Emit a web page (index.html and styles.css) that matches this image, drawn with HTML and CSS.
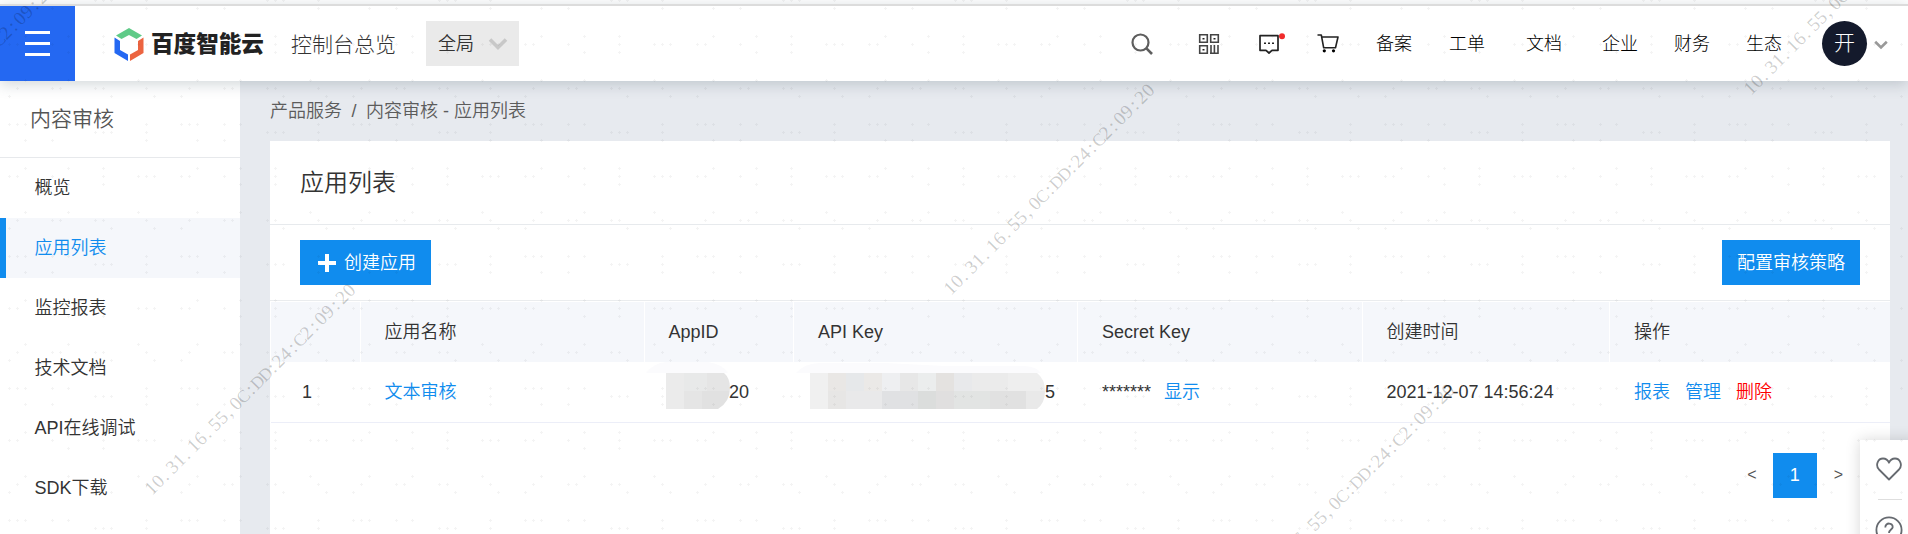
FILE: index.html
```html
<!DOCTYPE html>
<html lang="zh-CN">
<head>
<meta charset="utf-8">
<title>应用列表</title>
<link rel="stylesheet" href="styles.css">
</head>
<body>
<header class="topbar">
  <div class="menu-btn"><i></i><i></i><i></i></div>
  <div class="logo">
    <svg class="logo-mark" viewBox="0 0 30 34">
      <path d="M15 1 28 8.5 22.5 12 15 8 7.5 12 2 8.5Z" fill="#5fcb88"/>
      <path d="M0.5 10.5 6 14v9l8 4.500V34L0.5 26Z" fill="#2468f2"/>
      <path d="M29.5 10.5 24 14v9l-8 4.500V34L29.5 26Z" fill="#ec6440"/>
    </svg>
    <span class="logo-text">百度智能云</span>
  </div>
  <span class="overview">控制台总览</span>
  <div class="region"><span>全局</span>
    <svg width="20" height="14" viewBox="0 0 20 14"><path d="M2 2.500 10 10.500 18 2.500" fill="none" stroke="#c8c8c8" stroke-width="3.600"/></svg>
  </div>
  <nav class="tools">
    <svg class="icon" viewBox="0 0 22 22"><circle cx="9.500" cy="9.500" r="8" fill="none" stroke="#5e5e5e" stroke-width="2.200"/><path d="M15.200 15.200 21 21" stroke="#5e5e5e" stroke-width="2.600"/></svg>
    <svg class="icon qr" viewBox="0 0 22 22"><g fill="none" stroke="#444" stroke-width="1.600"><path d="M1.700 1.700h7.600v7.600H1.700zM12.700 1.700h7.600v7.600h-7.600zM1.700 12.700h7.600v7.600H1.700zM13 12v8M16.400 12v8M20 12v8.300h-8"/></g><path d="M4.500 5h2v1.400h-2zM15.500 5h2v1.400h-2zM4.500 16h2v1.400h-2z" fill="#222"/></svg>
    <svg class="icon msg" viewBox="0 0 27 22"><path d="M2 2.700h18v14.600h-6L11 20l-3-2.700H2Z" fill="none" stroke="#222" stroke-width="1.700" stroke-linejoin="round"/><path d="M6 9.500h2v1.600H6zM10 9.500h2v1.600h-2zM14 9.500h2v1.600h-2z" fill="#222"/><circle cx="24" cy="3.200" r="3" fill="#f02b2b"/></svg>
    <svg class="icon cart" viewBox="0 0 22 22"><path d="M.5 2h3.800l2.400 12.800h11.800L21 4H5" fill="none" stroke="#222" stroke-width="1.600" stroke-linejoin="round"/><circle cx="7.300" cy="17.800" r="1.600"/><circle cx="16.500" cy="17.800" r="1.600"/></svg>
    <a class="n1">备案</a><a>工单</a><a class="wide">文档</a><a class="wide">企业</a><a>财务</a><a>生态</a>
    <span class="avatar">开</span>
    <svg class="caret" width="14" height="10" viewBox="0 0 14 10"><path d="M1.200 1.800 7 7.500 12.800 1.800" fill="none" stroke="#999" stroke-width="2.600"/></svg>
  </nav>
</header>
<div class="body">
  <aside class="side">
    <div class="side-title">内容审核</div>
    <a>概览</a>
    <a class="active">应用列表</a>
    <a>监控报表</a>
    <a>技术文档</a>
    <a>API在线调试</a>
    <a>SDK下载</a>
  </aside>
  <main class="main">
    <div class="crumbs"><span>产品服务</span><span class="sep">/</span><span>内容审核 - 应用列表</span></div>
    <section class="card">
      <h1>应用列表</h1>
      <div class="actions">
        <button class="btn"><svg width="18" height="18" viewBox="0 0 18 18"><path d="M9 0v18M0 9h18" stroke="#fff" stroke-width="4"/></svg>创建应用</button>
        <button class="btn">配置审核策略</button>
      </div>
      <div class="row head">
        <span></span><span>应用名称</span><span>AppID</span><span>API Key</span><span>Secret Key</span><span>创建时间</span><span>操作</span>
      </div>
      <div class="row data">
        <span class="idx">1</span>
        <span><a>文本审核</a></span>
        <span class="masked">
          <svg class="mask-id" width="84" height="52" viewBox="0 0 84 52">
            <path d="M0 12Q8 2 20 1H62Q76 3 82 12Z" fill="#fbfbfd"/>
            <clipPath id="m1"><path d="M20 12H78Q84 17 84 27 84 41 72 48H20Z"/></clipPath>
            <g clip-path="url(#m1)"><path d="M20 12h18v36H20z" fill="#ebebeb"/><path d="M38 12h23v18H38z" fill="#e8e9e9"/><path d="M61 12h23v18H61z" fill="#e5e5e5"/><path d="M38 30h18v18H38z" fill="#e5e5e5"/><path d="M56 30h28v18H56z" fill="#e1e1e1"/></g>
          </svg>20</span>
        <span class="masked">
          <svg class="mask-key" width="250" height="52" viewBox="0 0 250 52">
            <path d="M1 12Q10 2 25 2H90L150 5H230Q242 6 246 12Z" fill="#fbfbfd"/>
            <clipPath id="m2"><path d="M15 12H242Q250 18 250 30 250 42 242 48H15Z"/></clipPath>
            <g clip-path="url(#m2)">
              <path d="M15 12h18v36H15z" fill="#f0f0f0"/><path d="M33 12h18v18H33z" fill="#e9e7e5"/><path d="M51 12h18v18H51z" fill="#e6e8ea"/><path d="M69 12h18v18H69z" fill="#ebe9e7"/><path d="M87 12h18v18H87z" fill="#eeeff1"/><path d="M105 12h18v18h-18z" fill="#e7e7e7"/><path d="M123 12h18v18h-18z" fill="#ebeded"/><path d="M141 12h18v18h-18z" fill="#e4e2e0"/><path d="M159 12h18v18h-18z" fill="#e8e9eb"/><path d="M177 12h36v18h-36z" fill="#ebebeb"/><path d="M213 12h37v18h-37z" fill="#eee"/>
              <path d="M33 30h18v18H33z" fill="#e7e6e5"/><path d="M51 30h36v18H51z" fill="#e9e9ea"/><path d="M87 30h36v18H87z" fill="#e0e1e3"/><path d="M123 30h18v18h-18z" fill="#dbdddc"/><path d="M141 30h18v18h-18z" fill="#e0dfdf"/><path d="M159 30h36v18h-36z" fill="#e2e4e3"/><path d="M195 30h36v18h-36z" fill="#e1e1e1"/><path d="M231 30h19v18h-19z" fill="#e9e9e9"/>
            </g>
          </svg>5</span>
        <span class="secret">*******<a>显示</a></span>
        <span>2021-12-07 14:56:24</span>
        <span class="ops"><a>报表</a><a>管理</a><a class="del">删除</a></span>
      </div>
      <div class="pager"><span>&lt;</span><b>1</b><span>&gt;</span></div>
    </section>
  </main>
</div>
<div class="float">
  <svg width="26" height="24" viewBox="0 0 26 24"><path d="M13 22.500 3 12.500C-1 8 2 1.500 7 1.500c3 0 5 1.800 6 4.200 1-2.400 3-4.200 6-4.200 5 0 8 6.500 4 11Z" fill="none" stroke="#666a70" stroke-width="1.800" stroke-linejoin="round"/></svg>
  <hr>
  <svg width="28" height="28" viewBox="0 0 28 28"><circle cx="14" cy="14" r="12.600" fill="none" stroke="#666a70" stroke-width="1.800"/><path d="M10.300 11.500C10.300 6 18 6.500 17.700 11.200 17.500 13.500 14 13.800 14 17" fill="none" stroke="#666a70" stroke-width="1.800"/></svg>
</div>
<svg class="watermark" width="1908" height="534">
  <defs>
    <path id="x" d="M-1 0h3v1h-3zM0-1h1v3h-1z"/>
    <pattern id="dots" x="904" y="72" width="172" height="132" patternUnits="userSpaceOnUse">
      <g fill="#000" fill-opacity=".045">
        <use href="#x" x="24" y="8"/><use href="#x" x="94" y="8"/><use href="#x" x="153" y="8"/>
        <use href="#x" x="8" y="16"/><use href="#x" x="16" y="16"/><use href="#x" x="51" y="16"/><use href="#x" x="59" y="16"/><use href="#x" x="102" y="16"/><use href="#x" x="145" y="16"/>
        <use href="#x" x="67" y="24"/><use href="#x" x="110" y="24"/><use href="#x" x="137" y="24"/>
        <use href="#x" x="8" y="52"/><use href="#x" x="24" y="52"/><use href="#x" x="102" y="52"/><use href="#x" x="137" y="52"/><use href="#x" x="145" y="52"/><use href="#x" x="153" y="52"/>
        <use href="#x" x="51" y="60"/><use href="#x" x="59" y="60"/><use href="#x" x="67" y="60"/><use href="#x" x="102" y="60"/>
        <use href="#x" x="8" y="68"/><use href="#x" x="102" y="68"/><use href="#x" x="153" y="68"/>
        <use href="#x" x="24" y="96"/><use href="#x" x="59" y="96"/><use href="#x" x="153" y="96"/>
        <use href="#x" x="8" y="104"/><use href="#x" x="59" y="104"/><use href="#x" x="94" y="104"/><use href="#x" x="102" y="104"/><use href="#x" x="110" y="104"/><use href="#x" x="137" y="104"/><use href="#x" x="145" y="104"/>
        <use href="#x" x="24" y="112"/><use href="#x" x="59" y="112"/>
      </g>
    </pattern>
  </defs>
  <rect width="1908" height="534" fill="url(#dots)"/>
  <g class="stamp">
    <text transform="translate(951 296) rotate(-45)" x="0 10 21 30 40 51 60 70 81 90 100 111 120 129 142 149 160 173 180 190 202 209 220 232 240 250 262 270 280">10.31.16.55,0<tspan>C</tspan>:<tspan>DD</tspan>:24:<tspan>C</tspan>2:09:20</text>
    <text transform="translate(152 496) rotate(-45)" x="0 10 21 30 40 51 60 70 81 90 100 111 120 129 142 149 160 173 180 190 202 209 220 232 240 250 262 270 280">10.31.16.55,0<tspan>C</tspan>:<tspan>DD</tspan>:24:<tspan>C</tspan>2:09:20</text>
    <text transform="translate(1251 596) rotate(-45)" x="0 10 21 30 40 51 60 70 81 90 100 111 120 129 142 149 160 173 180 190 202 209 220 232 240 250 262 270 280">10.31.16.55,0<tspan>C</tspan>:<tspan>DD</tspan>:24:<tspan>C</tspan>2:09:20</text>
    <text transform="translate(1751 96) rotate(-45)" x="0 10 21 30 40 51 60 70 81 90 100 111 120 129 142 149 160 173 180 190 202 209 220 232 240 250 262 270 280">10.31.16.55,0<tspan>C</tspan>:<tspan>DD</tspan>:24:<tspan>C</tspan>2:09:20</text>
    <text transform="translate(-149 196) rotate(-45)" x="0 10 21 30 40 51 60 70 81 90 100 111 120 129 142 149 160 173 180 190 202 209 220 232 240 250 262 270 280">10.31.16.55,0<tspan>C</tspan>:<tspan>DD</tspan>:24:<tspan>C</tspan>2:09:20</text>
  </g>
</svg>
</body>
</html>
```
FILE: styles.css
```css
* { box-sizing: border-box; }
html, body { margin: 0; height: 534px; overflow: hidden; }
body {
  font: 350 18px/24px "Liberation Sans", "Noto Sans CJK SC", sans-serif;
  color: #333;
  background: #fff;
  display: flex;
  flex-direction: column;
}
svg { display: block; flex: none; }
a { color: inherit; text-decoration: none; }

.topbar {
  flex: none;
  height: 77px;
  margin-top: 4px;
  border-top: 2px solid #dcdcdc;
  display: flex;
  align-items: center;
  background: #fff;
  position: relative;
  z-index: 2;
  box-shadow: 0 3px 14px rgba(60, 80, 90, .24);
}
.menu-btn {
  width: 75px;
  height: 75px;
  background: #2468f2;
  display: flex;
  flex-direction: column;
  align-items: center;
  justify-content: center;
  gap: 8px;
}
.menu-btn i { width: 25px; height: 3px; background: #fff; }
.logo { display: flex; align-items: center; margin-left: 39px; gap: 7px; width: 177px; }
.logo-mark { width: 30px; height: 34px; }
.logo-text { font-size: 22.6px; font-weight: 900; color: #222; white-space: nowrap; padding-top: 2px; }
.overview { font-size: 21px; font-weight: 300; width: 135px; padding-top: 2px; white-space: nowrap; }
.region {
  width: 93px;
  height: 45px;
  background: #eaeaea;
  display: flex;
  align-items: center;
  justify-content: space-between;
  padding: 0 11px 0 12px;
}
.tools { flex: 1; display: flex; align-items: center; margin-left: 612px; color: #000; font-weight: 300; white-space: nowrap; }
.tools a { margin-right: 36px; width: 36px; }
.tools a.n1 { margin-left: 37px; }
.tools a.n1 + a { margin-right: 37px; margin-left: 1px; }
.tools a.wide { margin-left: 4px; }
.icon { width: 22px; height: 22px; }
.qr { margin-left: 45px; }
.msg { width: 27px; margin-left: 38px; }
.cart { margin-left: 32px; }
.avatar {
  width: 45px;
  height: 45px;
  border-radius: 50%;
  background: #141a2c;
  color: #fff;
  font-size: 21px;
  line-height: 44px;
  text-align: center;
  margin-left: 4px;
}
.caret { margin-left: 7px; margin-top: 3px; }

.body { flex: 1; display: flex; min-height: 0; }
.side { width: 240px; flex: none; background: #fff; display: flex; flex-direction: column; }
.side-title {
  height: 77px;
  border-bottom: 1px solid #e7e9ec;
  padding-left: 30px;
  font-size: 21px;
  line-height: 75px;
  color: #555;
}
.side a { height: 60px; line-height: 61px; padding-left: 34.5px; flex: none; }
.side .active { background: #f5f7fb; color: #108cee; border-left: 6px solid #108cee; padding-left: 28.5px; }

.main { flex: 1; background: #e7eaef; padding: 0 18px 0 30px; }
.crumbs { height: 60px; line-height: 60px; color: #5c5c5c; display: flex; }
.sep { width: 24px; text-align: center; }
.card { background: #fff; height: 400px; }
h1 { margin: 0; height: 84px; border-bottom: 1px solid #e7eaed; padding-left: 30px; font-size: 24px; font-weight: 350; line-height: 83px; }
.actions { height: 75px; display: flex; justify-content: space-between; align-items: center; padding: 0 30px; }
.btn {
  height: 45px;
  border: 0;
  background: #108cee;
  color: #fff;
  font: inherit;
  padding: 0 15px;
  display: flex;
  align-items: center;
  gap: 8px;
}
.btn:first-child { width: 131px; padding: 0 0 0 18px; }
.btn:last-child { width: 138px; }

.row {
  display: grid;
  grid-template-columns: 90px 284px 149px 284px 285px 247px 280px;
  margin-left: 1px;
  white-space: nowrap;
}
.row > span { padding-left: 23.5px; }
.row > span:nth-child(5), .row > span:nth-child(4), .row > span:last-child { padding-left: 24px; }
.head { height: 62px; border-top: 1px solid #eaecee; line-height: 60px; padding-top: 1px; margin-left: 0; padding-left: 1px; }
.head > span { background: #f5f7fb; border-right: 1px solid #fff; height: 60px; }
.head > span:last-child { border-right: 0; }
.data { height: 61px; line-height: 60px; border-bottom: 1px solid #eceef8; }
.data a { color: #108cee; }
.data .idx { padding-left: 31px; }
.data > span.masked { display: flex; padding-left: 1px; }
.mask-id, .mask-key { margin: -1px 0 0; }
.mask-id { margin-right: -1px; }
.secret a { margin-left: 13px; }
.ops a { margin-right: 15px; }
.data .del { color: #f00; }
.pager { display: flex; margin-top: 30px; height: 45px; line-height: 43px; justify-content: flex-end; padding-right: 47px; color: #555; font-size: 16px; }
.pager b { width: 44px; background: #108cee; color: #fff; text-align: center; margin: 0 17px 0 16px; font-size: 18px; font-weight: 400; line-height: 44px; }

.float {
  position: absolute;
  left: 1860px;
  top: 440px;
  width: 60px;
  height: 110px;
  background: #fff;
  padding: 17px 0 0 16px;
  box-shadow: 0 0 14px rgba(0, 0, 0, .16);
  z-index: 1;
}
.float hr { width: 24px; height: 1px; border: 0; background: #dedede; margin: 18px 0 16px 2px; }
.float svg:last-child { margin-left: -1px; }

.watermark { position: absolute; left: 0; top: 0; z-index: 3; pointer-events: none; }
.stamp { font: 19px "Liberation Serif", serif; fill: #000; fill-opacity: .2; }
.stamp tspan { font-size: 17.5px; }
```
